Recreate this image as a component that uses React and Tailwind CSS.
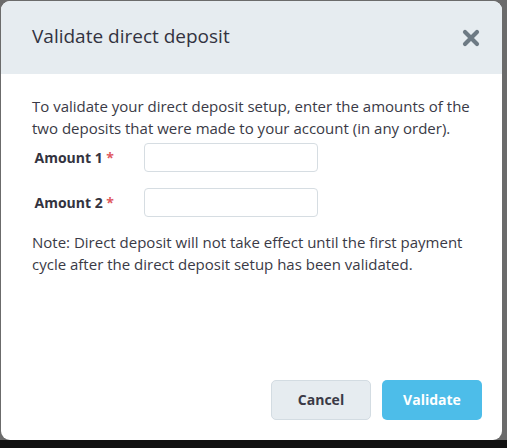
import { useState } from "react";

const font = { fontFamily: "'Open Sans', Lato, sans-serif" };

export default function App() {
  const [amounts, setAmounts] = useState({ a1: "", a2: "" });

  return (
    <div className="flex h-[448px] w-[507px] flex-col overflow-hidden bg-[#6b6b6b]" style={font}>
      <div className="ml-px mt-px flex h-[439px] w-[501px] flex-col overflow-hidden rounded-[9px] bg-white">
        <div className="flex h-[73px] shrink-0 items-center justify-between bg-[#e6ecf0] pl-[31px] pr-[22px]">
          <h2 className="pb-[2px] text-[19px] text-[#333340]">Validate direct deposit</h2>
          <button type="button" className="text-[#6d7a84]" aria-label="Close">
            <svg width="18" height="18" viewBox="0 0 18 18">
              <path d="M3 3 L15 15 M15 3 L3 15" stroke="currentColor" strokeWidth="4.2" strokeLinecap="round" />
            </svg>
          </button>
        </div>

        <div className="flex flex-1 flex-col pl-[31px] pr-[20px] pt-[21px] text-[15px] leading-[22px] text-[#3a3a46]">
          <p>
            To validate your direct deposit setup, enter the amounts of the two deposits that were made
            to your account (in any order).
          </p>

          <Field label="Amount 1" className="mt-[4px]">
            <input
              value={amounts.a1}
              onChange={(e) => setAmounts({ ...amounts, a1: e.target.value })}
              className="h-[29px] w-[174px] rounded border border-[#d6dde2] px-2 outline-none"
            />
          </Field>
          <Field label="Amount 2" className="mt-[16px]">
            <input
              value={amounts.a2}
              onChange={(e) => setAmounts({ ...amounts, a2: e.target.value })}
              className="h-[29px] w-[174px] rounded border border-[#d6dde2] px-2 outline-none"
            />
          </Field>

          <p className="mt-[14px]">
            Note: Direct deposit will not take effect until the first payment cycle after the direct
            deposit setup has been validated.
          </p>

          <div className="mt-auto mb-[20px] flex justify-end gap-[11px]">
            <button
              type="button"
              className="h-[40px] w-[100px] rounded-[5px] border border-[#d3dce2] bg-[#e6ecf0] text-[14px] font-bold text-[#3a3a46]"
            >
              Cancel
            </button>
            <button
              type="button"
              className="h-[40px] w-[100px] rounded-[5px] bg-[#4dbde9] text-[14px] font-bold text-white"
            >
              Validate
            </button>
          </div>
        </div>
      </div>
      <div className="mt-auto h-[8px] bg-[#111]" />
    </div>
  );
}

function Field({ label, className, children }) {
  return (
    <div className={`flex items-center ${className}`}>
      <label className="w-[82px] text-right text-[14px] font-bold text-[#333340]">
        {label} <span className="text-[#e0595f]">*</span>
      </label>
      <div className="ml-[30px]">{children}</div>
    </div>
  );
}
